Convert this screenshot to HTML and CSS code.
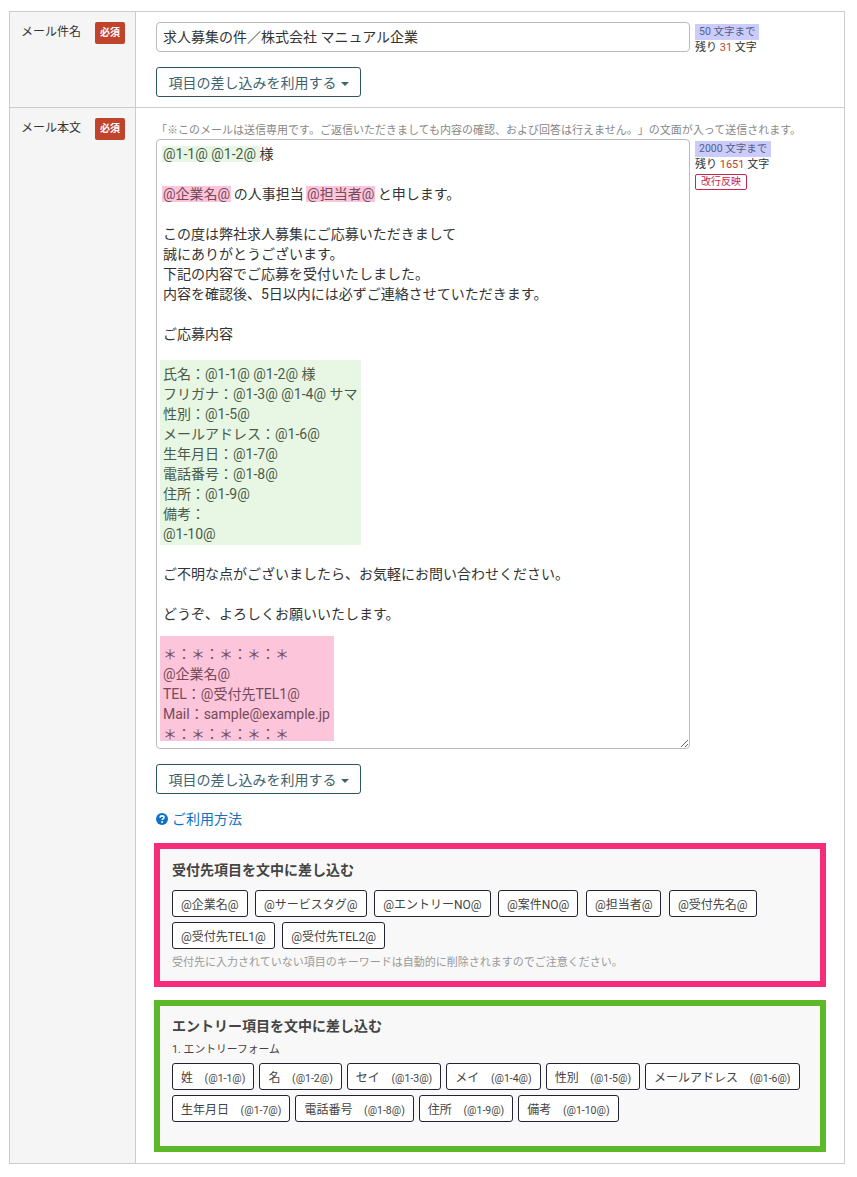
FILE: index.html
```html
<!DOCTYPE html>
<html lang="ja">
<head>
    <meta charset="UTF-8">
    <meta name="viewport" content="width=device-width, initial-scale=1.0">
    <title>メール設定</title>
    <link rel="stylesheet" href="styles.css">
</head>
<body>

    <table class="form-table">
        <tr>
            <th>
                <div class="th-inner">
                    <span>メール件名</span>
                    <span class="required">必須</span>
                </div>
            </th>
            <td class="subject-cell">
                <div class="field-row">
                    <input class="subject-input" type="text" value="求人募集の件／株式会社 マニュアル企業">
                    <div class="counter">
                        <div><span class="limit">50 文字まで</span></div>
                        <div class="remain">残り <em>31</em> 文字</div>
                    </div>
                </div>
                <button class="insert-btn">項目の差し込みを利用する<i class="caret"></i></button>
            </td>
        </tr>
        <tr>
            <th>
                <div class="th-inner">
                    <span>メール本文</span>
                    <span class="required">必須</span>
                </div>
            </th>
            <td class="body-cell">
                <p class="note">「※このメールは送信専用です。ご返信いただきましても内容の確認、および回答は行えません。」の文面が入って送信されます。</p>
                <div class="field-row">
                    <div class="editor">
                        <div><mark class="green">@1-1@ @1-2@</mark> 様</div>
                        <br>
                        <div><mark class="pink">@企業名@</mark> の人事担当 <mark class="pink">@担当者@</mark> と申します。</div>
                        <br>
                        <div>この度は弊社求人募集にご応募いただきまして</div>
                        <div>誠にありがとうございます。</div>
                        <div>下記の内容でご応募を受付いたしました。</div>
                        <div>内容を確認後、5日以内には必ずご連絡させていただきます。</div>
                        <br>
                        <div>ご応募内容</div>
                        <br>
                        <div class="block block-green green">
                            <div>氏名：@1-1@ @1-2@ 様</div>
                            <div>フリガナ：@1-3@ @1-4@ サマ</div>
                            <div>性別：@1-5@</div>
                            <div>メールアドレス：@1-6@</div>
                            <div>生年月日：@1-7@</div>
                            <div>電話番号：@1-8@</div>
                            <div>住所：@1-9@</div>
                            <div>備考：</div>
                            <div>@1-10@</div>
                        </div>
                        <br>
                        <div>ご不明な点がございましたら、お気軽にお問い合わせください。</div>
                        <br>
                        <div>どうぞ、よろしくお願いいたします。</div>
                        <br>
                        <div class="block block-pink pink">
                            <div>＊：＊：＊：＊：＊</div>
                            <div>@企業名@</div>
                            <div>TEL：@受付先TEL1@</div>
                            <div>Mail：sample@example.jp</div>
                            <div>＊：＊：＊：＊：＊</div>
                        </div>
                    </div>
                    <div class="counter">
                        <div><span class="limit">2000 文字まで</span></div>
                        <div class="remain">残り <em>1651</em> 文字</div>
                        <span class="newline-tag">改行反映</span>
                    </div>
                </div>
                <button class="insert-btn">項目の差し込みを利用する<i class="caret"></i></button>
                <a class="help-link" href="#">
                    <svg class="help-icon" viewBox="0 0 12 12">
                        <circle cx="6" cy="6" r="6" fill="#0b72c6"/>
                        <path d="M4.1 4.7c0-1.1.9-1.8 2-1.8s1.9.7 1.9 1.6c0 1.4-1.9 1.3-1.9 2.6" fill="none" stroke="#fff" stroke-width="1.6"/>
                        <circle cx="6.1" cy="9.1" r="1" fill="#fff"/>
                    </svg>
                    ご利用方法
                </a>

                <section class="tag-box tag-box-pink">
                    <h3>受付先項目を文中に差し込む</h3>
                    <div class="tags">
                        <button class="tag">@企業名@</button>
                        <button class="tag">@サービスタグ@</button>
                        <button class="tag">@エントリーNO@</button>
                        <button class="tag">@案件NO@</button>
                        <button class="tag">@担当者@</button>
                        <button class="tag">@受付先名@</button>
                        <button class="tag">@受付先TEL1@</button>
                        <button class="tag">@受付先TEL2@</button>
                    </div>
                    <p class="hint">受付先に入力されていない項目のキーワードは自動的に削除されますのでご注意ください。</p>
                </section>

                <section class="tag-box tag-box-green">
                    <h3>エントリー項目を文中に差し込む</h3>
                    <p class="form-name">1. エントリーフォーム</p>
                    <div class="tags">
                        <button class="tag">姓<span>(@1-1@)</span></button>
                        <button class="tag">名<span>(@1-2@)</span></button>
                        <button class="tag">セイ<span>(@1-3@)</span></button>
                        <button class="tag">メイ<span>(@1-4@)</span></button>
                        <button class="tag">性別<span>(@1-5@)</span></button>
                        <button class="tag">メールアドレス<span>(@1-6@)</span></button>
                        <button class="tag">生年月日<span>(@1-7@)</span></button>
                        <button class="tag">電話番号<span>(@1-8@)</span></button>
                        <button class="tag">住所<span>(@1-9@)</span></button>
                        <button class="tag">備考<span>(@1-10@)</span></button>
                    </div>
                </section>
            </td>
        </tr>
    </table>

</body>
</html>
```

FILE: styles.css
```css
* {
    box-sizing: border-box;
}

body {
    margin: 0;
    padding: 11px 12px 13px 9px;
    background-color: white;
    color: #333;
    font-family: Roboto, "Noto Sans CJK JP", sans-serif;
    font-size: 14px;
    text-spacing-trim: space-all;
}

button,
input {
    font-family: inherit;
    text-spacing-trim: space-all;
}

.form-table {
    width: 836px;
    table-layout: fixed;
    border-collapse: collapse;
}

.form-table th,
.form-table td {
    border: 1px solid #ccc;
    vertical-align: top;
}

.form-table th {
    width: 126px;
    padding: 10px 10px 0 11px;
    background-color: #f5f5f5;
    font-size: 12px;
    font-weight: normal;
    text-align: left;
}

.th-inner {
    display: flex;
    justify-content: space-between;
    align-items: flex-start;
    height: 22px;
}

.required {
    width: 30px;
    height: 22px;
    line-height: 22px;
    border-radius: 2px;
    background-color: #c0432b;
    color: white;
    font-size: 10px;
    font-weight: bold;
    text-align: center;
}

.subject-cell {
    padding: 10px 20px 10px 20px;
}

.subject-cell .field-row {
    height: 30px;
}

.body-cell {
    padding: 15px 18px 11px 18px;
}

.field-row {
    display: flex;
    gap: 5px;
    align-items: flex-start;
}

.subject-input {
    width: 534px;
    height: 30px;
    padding: 0 6px 2px;
    border: 1px solid #bbb;
    border-radius: 4px;
    color: #333;
    font-size: 14px;
}

.counter {
    padding-top: 2px;
    font-size: 11px;
    line-height: 16px;
}

.limit {
    display: inline-block;
    padding: 0 4px;
    background-color: #ccccfb;
    color: #4f6088;
    font-size: 10.5px;
}

.remain em {
    color: #c0432b;
    font-style: normal;
}

.newline-tag {
    display: inline-block;
    margin-top: 1px;
    padding: 0 5px;
    border: 1px solid #c8264f;
    border-radius: 2px;
    color: #c8264f;
    font-size: 10px;
    line-height: 14px;
}

.insert-btn {
    display: block;
    width: 205px;
    height: 30px;
    margin-top: 15px;
    padding: 0;
    border: 1px solid #2f5562;
    border-radius: 3px;
    background-color: white;
    color: #40636f;
    font-size: 14px;
}

.caret {
    display: inline-block;
    margin-left: 4px;
    vertical-align: 2px;
    border-top: 4px solid #40636f;
    border-left: 4px solid transparent;
    border-right: 4px solid transparent;
}

.note {
    margin: 0 0 0 2px;
    color: #888;
    font-size: 11px;
    line-height: 16px;
}

.body-cell .field-row,
.body-cell .insert-btn,
.help-link {
    margin-left: 2px;
}

.editor {
    flex: none;
    width: 534px;
    height: 610px;
    padding: 4px 4px 0 6px;
    overflow: hidden;
    resize: both;
    border: 1px solid #bbb;
    border-radius: 4px;
    line-height: 20px;
}

.editor br {
    display: block;
    content: "";
    height: 20px;
}

mark {
    color: inherit;
}

.green {
    background-color: #e7f7e4;
    color: #4a5a4a;
}

.pink {
    background-color: #fdc5da;
    color: #744b5b;
}

mark.green,
mark.pink {
    padding: 0 1px;
    margin: 0 -1px;
}

mark.green {
    padding-right: 4px;
    margin-right: -4px;
}

.block {
    width: fit-content;
    padding-left: 3px;
    padding-right: 4px;
    margin-left: -3px;
}

.block-green {
    margin-top: -4px;
    margin-bottom: -1px;
    padding-top: 4px;
    padding-bottom: 1px;
}

.block-pink {
    height: 105px;
    margin-top: -8px;
    padding-top: 8px;
}

.help-link {
    display: flex;
    align-items: center;
    gap: 4px;
    margin-top: 15px;
    color: #0b72c6;
    line-height: 20px;
    text-decoration: none;
}

.help-icon {
    width: 12px;
    height: 12px;
}

.tag-box {
    margin-top: 14px;
    padding: 10px 12px 0;
    border: 6px solid;
    background-color: #f8f8f8;
}

.tag-box-pink {
    height: 144px;
    padding-top: 11px;
    border-color: #f72c78;
}

.tag-box-green {
    height: 152px;
    margin-top: 13px;
    border-color: #5eb92a;
}

.tag-box h3 {
    margin: 0;
    color: #444;
    font-size: 14px;
    line-height: 20px;
}

.tags {
    display: flex;
    flex-wrap: wrap;
    gap: 5px;
    margin-top: 10px;
}

.tag {
    height: 27px;
    padding: 0 8px;
    border: 1px solid #223;
    border-radius: 3px;
    background-color: white;
    color: #444;
    font-size: 12px;
    margin-right: 2.5px;
}

.tag span {
    margin-left: 11.6px;
    font-size: 10.5px;
}

.tag-box-green .tag {
    margin-right: 0;
}

.hint {
    margin: 6px 0 0;
    color: #999;
    font-size: 11px;
    line-height: 16px;
}

.form-name {
    margin: 7px 0 0;
    color: #444;
    font-size: 10.8px;
    line-height: 14px;
}

.tag-box-green .tags {
    margin-top: 6px;
}
```
